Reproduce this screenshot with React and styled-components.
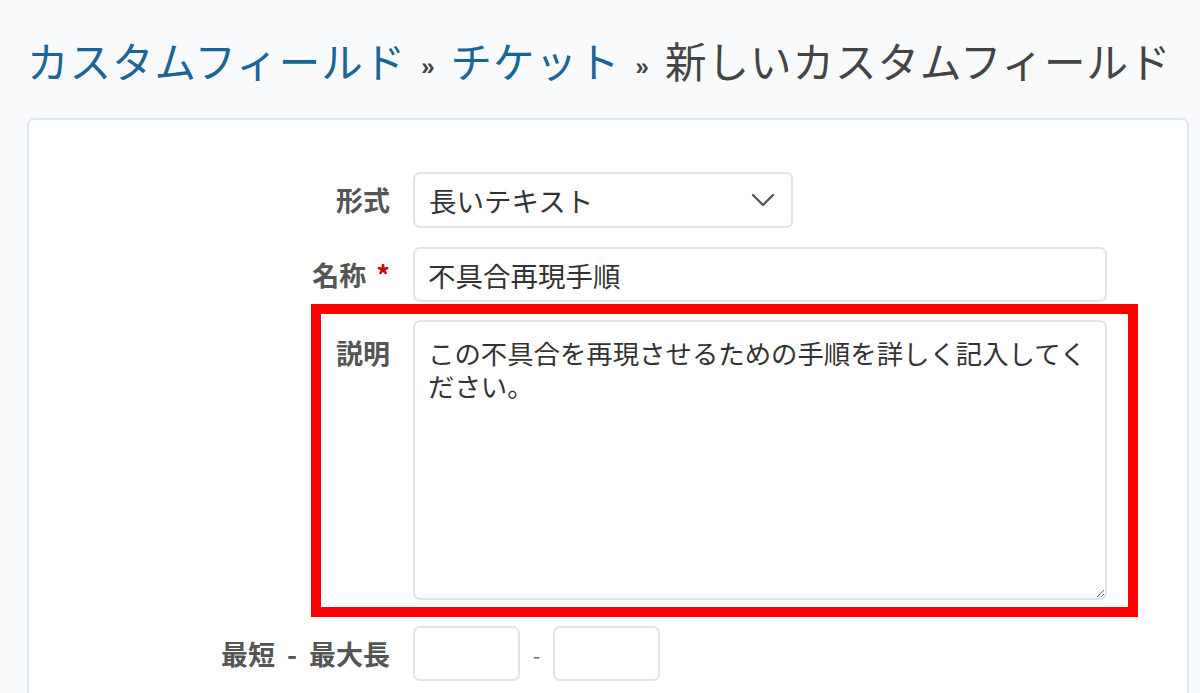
import styled, { createGlobalStyle } from "styled-components";

const GlobalStyle = createGlobalStyle`
    body {
        margin: 0;
        background: #f8fafc;
        font-family: "Noto Sans CJK JP", "Liberation Sans", sans-serif;
        color: #333;
    }
`;

const Page = styled.div`
    padding: 0 11px 0 27px;
    height: 693px;
    overflow: hidden;
`;

const Title = styled.h2`
    margin: 0;
    padding-top: 35px;
    height: 118px;
    box-sizing: border-box;
    font-size: 41.5px;
    line-height: 50px;
    font-weight: 400;
    color: #444;
    white-space: nowrap;
    letter-spacing: 1px;

    a {
        color: #1b6596;
        text-decoration: none;
    }
`;

const Sep = styled.span`
    display: inline-block;
    font-family: "Liberation Sans", sans-serif;
    font-size: 24px;
    font-weight: 700;
    letter-spacing: 0;
    margin: 0 16px 0 15px;
    vertical-align: 3px;
`;

const Panel = styled.div`
    background: #fff;
    border: 2px solid #dfe7f0;
    border-radius: 7px;
    padding: 52px 0 40px;
    min-height: 620px;
`;

const Row = styled.div`
    position: relative;
    display: flex;
    align-items: ${(p) => (p.$top ? "flex-start" : "center")};
    margin-bottom: ${(p) => p.$gap || 19}px;
`;

const Label = styled.label`
    width: 361px;
    flex: none;
    margin-right: 23px;
    text-align: right;
    font-size: 27px;
    font-weight: 700;
    color: #555;
    line-height: 34px;
    padding-top: ${(p) => p.$pt || 0}px;
`;

const Required = styled.span`
    color: #cc0000;
    margin-left: 10px;
`;

const LabelDash = styled.span`
    margin: 0 12px;
`;

const box = `
    box-sizing: border-box;
    border: 2px solid #dde6f0;
    border-radius: 7px;
    background: #fff;
    font-family: "Noto Sans CJK JP", "Liberation Sans", sans-serif;
    font-size: 27.5px;
    color: #333;
`;

const Select = styled.div`
    ${box};
    width: 380px;
    height: 56px;
    display: flex;
    align-items: center;
    justify-content: space-between;
    padding: 0 16px 0 14px;
`;

const TextInput = styled.input`
    ${box};
    width: ${(p) => p.$w || 694}px;
    height: 55px;
    padding: 0 13px;
    outline: none;
`;

const TextArea = styled.textarea`
    ${box};
    width: 694px;
    height: 280px;
    padding: 14px 13px;
    font-size: 26.4px;
    line-height: 33px;
    resize: vertical;
    outline: none;
`;

const Highlight = styled.div`
    position: absolute;
    left: 282px;
    top: -16px;
    width: 827px;
    height: 313px;
    box-sizing: border-box;
    border: 10px solid #ff0000;
    pointer-events: none;
`;

const Dash = styled.span`
    width: 33px;
    text-align: center;
    color: #777;
    font-size: 22px;
`;

const Chevron = () => (
    <svg width="24" height="14" viewBox="0 0 24 14" fill="none">
        <path d="M2 2l10 10L22 2" stroke="#555" strokeWidth="2.4" strokeLinecap="round" strokeLinejoin="round"/>
    </svg>
);

export default function App() {
    return (
        <Page>
            <GlobalStyle/>
            <Title>
                <a href="#">カスタムフィールド</a><Sep>»</Sep><a href="#">チケット</a><Sep>»</Sep>新しいカスタムフィールド
            </Title>
            <Panel>
                <Row>
                    <Label>形式</Label>
                    <Select>
                        <span>長いテキスト</span>
                        <Chevron/>
                    </Select>
                </Row>
                <Row $gap={18}>
                    <Label>名称<Required>*</Required></Label>
                    <TextInput defaultValue="不具合再現手順"/>
                </Row>
                <Row $top $gap={26}>
                    <Label $pt={16}>説明</Label>
                    <TextArea defaultValue="この不具合を再現させるための手順を詳しく記入してください。"/>
                    <Highlight/>
                </Row>
                <Row>
                    <Label>最短<LabelDash>-</LabelDash>最大長</Label>
                    <TextInput $w={107}/>
                    <Dash>-</Dash>
                    <TextInput $w={107}/>
                </Row>
            </Panel>
        </Page>
    );
}
